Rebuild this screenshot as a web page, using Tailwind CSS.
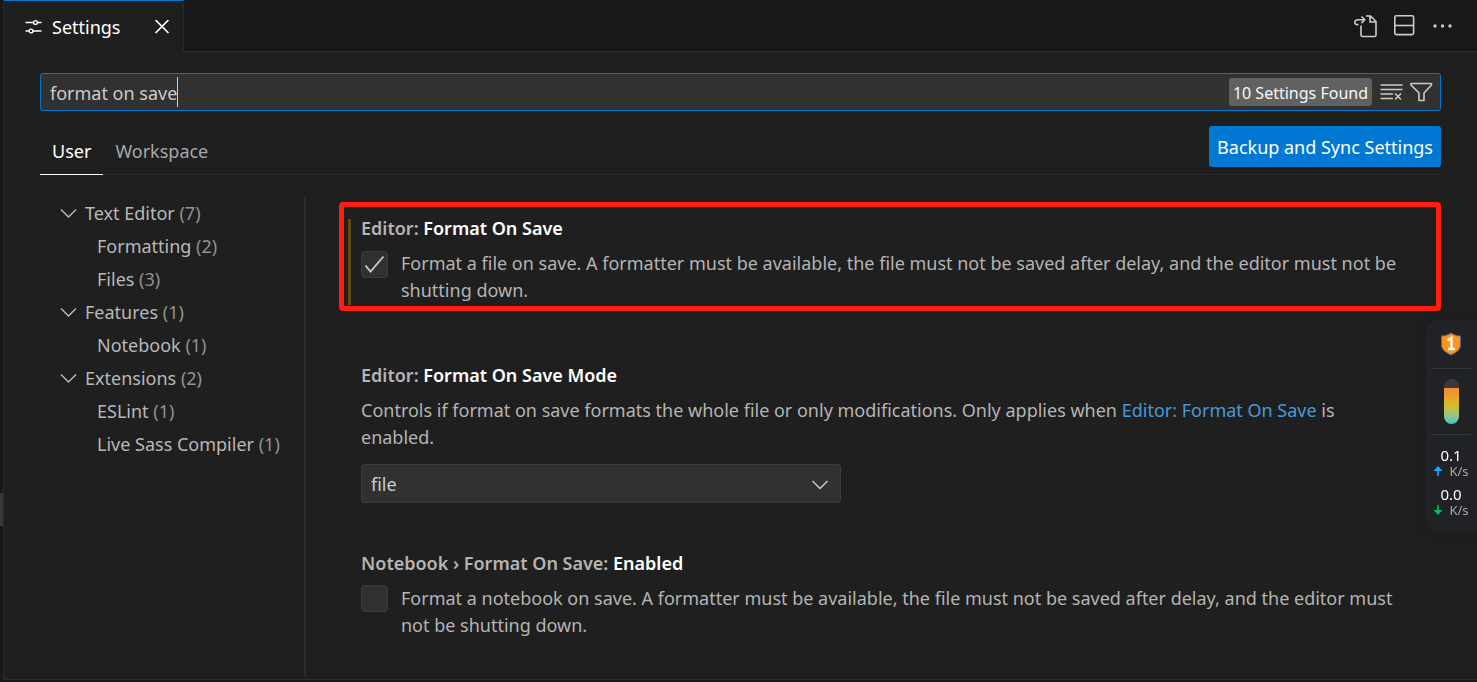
<!DOCTYPE html>
<html lang="en">
<head>
<meta charset="utf-8">
<meta name="viewport" content="width=device-width, initial-scale=1">
<title>Settings</title>
<script src="https://cdn.jsdelivr.net/npm/@tailwindcss/browser@4"></script>
</head>
<body class="flex h-screen overflow-hidden bg-[#181818] font-['Noto_Sans','Open_Sans',sans-serif] text-[18px] leading-[27px] text-[#b4b4b4]">
<div class="flex w-[3px] shrink-0 flex-col pt-[493px]"><div class="h-[33px] bg-[#37373d]"></div></div>
<div class="mb-[2px] flex min-w-0 grow flex-col border-b border-l border-[#2b2b2b] bg-[#1f1f1f]">
  <header class="flex h-[52px] shrink-0 bg-[#181818]">
    <div class="flex w-[180px] items-center border-t border-r border-t-[#0078d4] border-r-[#2b2b2b] bg-[#1f1f1f] pt-0.5 pl-5 text-white">
      <svg class="mr-2 size-5" viewBox="0 0 20 20" fill="none" stroke="currentColor" stroke-width="1.4" aria-hidden="true"><path d="M1.500 4.500h8M13.500 4.500h4M1.500 13h3.500M9 13H17.500"/><circle cx="11.500" cy="4.500" r="1.900"/><circle cx="7" cy="13" r="1.900"/></svg>
      <span class="grow">Settings</span>
      <button class="mr-[11px] grid size-5 place-items-center" aria-label="Close"><svg class="size-4" viewBox="0 0 16 16" stroke="currentColor" stroke-width="1.700" aria-hidden="true"><path d="M1.500 0l13 13M14.500 0l-13 13"/></svg></button>
    </div>
    <div class="flex grow items-center justify-end gap-[14px] border-b border-[#2b2b2b] pr-[23px] text-[#cccccc]">
      <button aria-label="Open settings JSON"><svg class="size-6" viewBox="0 0 24 24" fill="none" stroke="currentColor" stroke-width="1.600" stroke-linejoin="round" aria-hidden="true"><path d="M7 11.500V21q0 1.500 1.500 1.500h12q1.500 0 1.500-1.500V7.500L16.500 2H12M16 2v6h6M4.500 10.500C1.500 11 .8 9.500.8 8.500c0-1.800 1.200-2.700 3.200-2.700H10.500M7.500 2.500l3.300 3.300L7.500 9.100"/></svg></button>
      <button aria-label="Split editor"><svg class="size-6" viewBox="0 0 24 24" fill="none" stroke="currentColor" stroke-width="1.600" aria-hidden="true"><rect x="2.800" y="1.800" width="18.800" height="18.800" rx="1.500"/><path d="M2.500 11.500h19"/></svg></button>
      <button aria-label="More actions"><svg class="size-6" viewBox="0 0 24 24" fill="currentColor" aria-hidden="true"><circle cx="5" cy="12" r="1.700"/><circle cx="12.500" cy="12" r="1.700"/><circle cx="20" cy="12" r="1.700"/></svg></button>
    </div>
  </header>
  <main class="flex min-h-0 grow flex-col pt-[21px] pr-9 pl-9">
    <div class="flex h-[38px] shrink-0 items-center rounded-[3px] border border-[#0078d4] bg-[#313131] pr-1.5 pl-[9px] text-[#cccccc]">
      <input id="search" type="text" value="format on save" size="1" aria-label="Search settings" class="field-sizing-content h-full bg-transparent pt-px outline-none">
      <span class="h-[30px] w-px shrink-0 bg-[#cccccc]"></span>
      <span class="ml-auto flex h-7 items-center rounded-[3px] bg-[#616161] px-1 pt-0.5 text-[16px] text-[#f8f8f8]">10 Settings Found</span>
      <button class="ml-2" aria-label="Clear search"><svg class="size-6" viewBox="0 0 24 24" fill="none" stroke="currentColor" stroke-width="1.500" aria-hidden="true"><path d="M.5 5h22M.5 9.500h22M.5 14h12.500M.5 18.500h12.500M15 13.500l6 6M21 13.500l-6 6"/></svg></button>
      <button class="ml-1.5" aria-label="Filter settings"><svg class="size-6" viewBox="0 0 24 24" fill="none" stroke="currentColor" stroke-width="1.600" stroke-linejoin="round" aria-hidden="true"><path d="M1 3.500h20.500V5L14 13v7.500H9V13L1 5z"/></svg></button>
    </div>
    <div class="flex h-16 shrink-0 items-end border-b border-[#2b2b2b]">
      <button class="-mb-px h-12 border-b border-white px-3 pt-0.5 text-white">User</button>
      <button class="h-[47px] px-3 pt-0.5 text-[#a8a8a8]">Workspace</button>
      <button class="mb-[7px] ml-auto h-[41px] rounded-[3px] bg-[#0078d4] px-2 pt-0.5 whitespace-nowrap text-white">Backup and Sync Settings</button>
    </div>
    <div class="flex min-h-0 grow pt-[21px]">
      <nav class="mb-0.5 w-[266px] shrink-0 border-r-2 border-[#2b2b2b] pt-px text-[#b8b8b8]" aria-label="Settings groups">
        <ul class="leading-[33px] whitespace-nowrap">
          <li class="flex items-center gap-2 pl-5"><svg class="size-[17px]" viewBox="0 0 17 17" fill="none" stroke="currentColor" stroke-width="1.500" aria-hidden="true"><path d="M1 4.500l7.500 7.500L16 4.500"/></svg><a href="#text-editor">Text Editor <span class="text-[#929292]">(7)</span></a></li>
          <li class="pl-[57px]"><a href="#formatting">Formatting <span class="text-[#929292]">(2)</span></a></li>
          <li class="pl-[57px]"><a href="#files">Files <span class="text-[#929292]">(3)</span></a></li>
          <li class="flex items-center gap-2 pl-5"><svg class="size-[17px]" viewBox="0 0 17 17" fill="none" stroke="currentColor" stroke-width="1.500" aria-hidden="true"><path d="M1 4.500l7.500 7.500L16 4.500"/></svg><a href="#features">Features <span class="text-[#929292]">(1)</span></a></li>
          <li class="pl-[57px]"><a href="#notebook">Notebook <span class="text-[#929292]">(1)</span></a></li>
          <li class="flex items-center gap-2 pl-5"><svg class="size-[17px]" viewBox="0 0 17 17" fill="none" stroke="currentColor" stroke-width="1.500" aria-hidden="true"><path d="M1 4.500l7.500 7.500L16 4.500"/></svg><a href="#extensions">Extensions <span class="text-[#929292]">(2)</span></a></li>
          <li class="pl-[57px]"><a href="#eslint">ESLint <span class="text-[#929292]">(1)</span></a></li>
          <li class="pl-[57px]"><a href="#live-sass">Live Sass Compiler <span class="text-[#929292]">(1)</span></a></li>
        </ul>
      </nav>
      <div class="min-w-0 grow pt-[19px] pl-[55px]">
        <section class="relative" id="format-on-save">
          <div class="absolute top-1 -left-[13px] h-[86px] w-[3px] bg-[#644a12]"></div>
          <div class="pointer-events-none absolute -top-[13px] right-0 -left-[22px] h-[109px] rounded-[4px] border-5 border-[#ff1f10]"></div>
          <h2 class="font-semibold">Editor: <span class="text-white">Format On Save</span></h2>
          <div class="mt-2 flex gap-[13px] whitespace-nowrap">
            <span class="relative mt-px size-[27px] shrink-0"><input id="save" type="checkbox" checked class="block size-full appearance-none rounded-[4px] border border-[#3c3c3c] bg-[#313131]"><svg class="pointer-events-none absolute inset-0 size-full" viewBox="0 0 27 27" fill="none" stroke="#cccccc" stroke-width="1.800" aria-hidden="true"><path d="M4.500 14.500l5 6L22.500 5.500"/></svg></span>
            <label for="save">Format a file on save. A formatter must be available, the file must not be saved after delay, and the editor must not be<br>shutting down.</label>
          </div>
        </section>
        <section class="mt-[58px]">
          <h2 class="font-semibold">Editor: <span class="text-white">Format On Save Mode</span></h2>
          <p class="mt-2 whitespace-nowrap"><label for="mode">Controls if format on save formats the whole file or only modifications. Only applies when </label><a href="#format-on-save" class="text-[#4599dc]">Editor: Format On Save</a> is<br>enabled.</p>
          <div class="relative mt-[13px] w-[480px]">
            <select id="mode" class="block h-[39px] w-full appearance-none rounded-[3px] border border-[#3c3c3c] bg-[#313131] px-[9px] pt-0.5 text-[#cccccc]"><option>file</option><option>modifications</option></select>
            <svg class="pointer-events-none absolute top-[11px] right-3 size-[17px] text-[#cccccc]" viewBox="0 0 17 17" fill="none" stroke="currentColor" stroke-width="1.500" aria-hidden="true"><path d="M.5 6L8 13.500L15.500 6"/></svg>
          </div>
        </section>
        <section class="mt-[47px]">
          <h2 class="font-semibold">Notebook › Format On Save: <span class="text-white">Enabled</span></h2>
          <div class="mt-2 flex gap-[13px] whitespace-nowrap">
            <input id="nb" type="checkbox" class="block size-[27px] shrink-0 appearance-none rounded-[4px] border border-[#3c3c3c] bg-[#313131]">
            <label for="nb">Format a notebook on save. A formatter must be available, the file must not be saved after delay, and the editor must<br>not be shutting down.</label>
          </div>
        </section>
      </div>
    </div>
  </main>
</div>
<aside class="fixed top-[320px] right-0 flex h-[212px] w-[51px] flex-col items-center rounded-l-xl bg-[#202226] pt-3 pr-px text-[15px] leading-[18px] text-[#a8a8a8] shadow-[0_0_10px_#1a1b1d]" aria-label="Network monitor">
  <svg class="size-6" viewBox="0 0 24 24" aria-hidden="true"><path d="M12 1c3 2 6 3 9.500 3v9c0 5-5 8-9.500 10-4.500-2-9.500-5-9.500-10V4C6 4 9 3 12 1z" fill="#ff9416" stroke="#5360a0"/><path d="M8.500 8.500L12.500 6v11.500M9 17h7" fill="none" stroke="#fff" stroke-width="2.400"/></svg>
  <div class="mt-3 h-px w-10 bg-[#343a3d]"></div>
  <div class="mt-2.5 h-[45px] w-[15px] overflow-hidden rounded-full bg-[#38383d] pt-[9px]"><div class="h-9 bg-linear-to-b from-[#f48a35] via-[#d5bd20] to-[#30c5bd]"></div></div>
  <div class="mt-2.5 h-px w-10 bg-[#343a3d]"></div>
  <div class="mt-[11px] text-white">0.1</div>
  <div class="flex h-[14px] items-center gap-1.5 text-[13px]"><svg class="size-[10px]" viewBox="0 0 9 10" aria-hidden="true"><path d="M4.500 0L9 5H5.300v5H3.700V5H0z" fill="#18a8ff"/></svg>K/s</div>
  <div class="mt-[7px] text-white">0.0</div>
  <div class="flex h-[14px] items-center gap-1.5 text-[13px]"><svg class="size-[10px]" viewBox="0 0 9 10" aria-hidden="true"><path d="M4.500 10L9 5H5.300V0H3.700v5H0z" fill="#08bd5c"/></svg>K/s</div>
</aside>
</body>
</html>
